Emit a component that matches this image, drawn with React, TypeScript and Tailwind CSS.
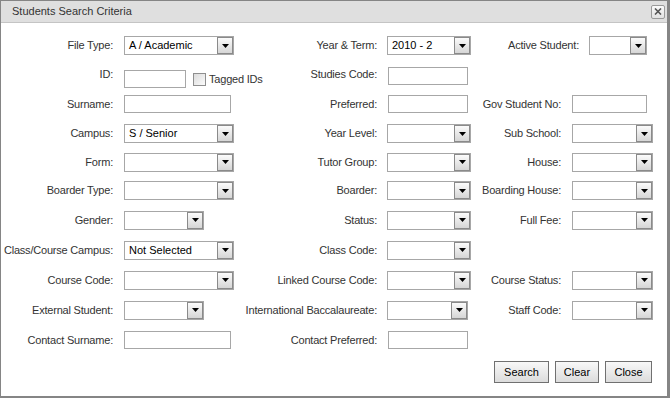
import React from "react";

function Select({ w, value }: { w: string; value?: string }) {
  return (
    <div className={`${w} h-[19px] flex border border-[#a7a7a7] bg-white`}>
      <div className="flex-1 pl-[4px] text-[11px] leading-[17px] text-black whitespace-nowrap overflow-hidden">
        {value}
      </div>
      <div className="w-[16px] h-full border border-[#8a8a8a] bg-gradient-to-b from-[#fbfbfb] to-[#d6d6d6] flex items-center justify-center">
        <svg width="7" height="4" viewBox="0 0 7 4">
          <path d="M0 0h7L3.5 4z" fill="#000" />
        </svg>
      </div>
    </div>
  );
}

function Input({ w }: { w: string }) {
  return <div className={`${w} h-[18px] border border-[#a7a7a7] bg-white`} />;
}

function Label({ w, children }: { w: string; children?: React.ReactNode }) {
  return (
    <div className={`${w} shrink-0 text-right whitespace-nowrap text-[#333] tracking-[-0.2px]`}>{children}</div>
  );
}

function Btn({ w, children }: { w: string; children: React.ReactNode }) {
  return (
    <button
      className={`${w} h-[22px] border border-[#707070] bg-gradient-to-b from-[#f8f8f8] to-[#dcdcdc] text-[11px] text-black`}
    >
      {children}
    </button>
  );
}

type Ctl = React.ReactNode;

function Row({ h, a, b, c, aCtl, bCtl, cCtl }: { h: string; a?: string; b?: string; c?: string; aCtl?: Ctl; bCtl?: Ctl; cCtl?: Ctl }) {
  return (
    <div className={`flex items-center ${h}`}>
      <Label w="w-[112px]">{a}</Label>
      <div className="w-[127px] shrink-0 pl-[11px] flex items-center">{aCtl}</div>
      <Label w="w-[137px]">{b}</Label>
      <div className="w-[98px] shrink-0 pl-[10px] flex items-center">{bCtl}</div>
      <Label w="w-[86px]">{c}</Label>
      <div className="pl-[11px] flex items-center">{cCtl}</div>
    </div>
  );
}

export default function App() {
  return (
    <div className="w-[670px] h-[398px] bg-white border-l border-t border-r-[3px] border-b-[2px] border-[#858585] flex flex-col font-['Liberation_Sans',Arial,sans-serif] text-[11px]">
      <div className="h-[22px] shrink-0 bg-[#dfdfdf] border-b border-[#c4c4c4] flex items-center justify-between pl-[11px] pr-[2px]">
        <span className="text-[#333] text-[11px]">Students Search Criteria</span>
        <div className="w-[14px] h-[14px] rounded-[2px] border border-[#9a9a9a] bg-gradient-to-b from-[#fafafa] to-[#e2e2e2] flex items-center justify-center">
          <svg width="8" height="7" viewBox="0 0 8 7">
            <path d="M1 0.5l6 6M7 0.5l-6 6" stroke="#555" strokeWidth="1.6" />
          </svg>
        </div>
      </div>

      <div className="pt-[8px] flex flex-col">
        {/* row 1 has its own third column */}
        <div className="flex items-center h-[29px]">
          <Label w="w-[112px]">File Type:</Label>
          <div className="w-[127px] shrink-0 pl-[11px] flex items-center">
            <Select w="w-[110px]" value="A / Academic" />
          </div>
          <Label w="w-[137px]">Year &amp; Term:</Label>
          <div className="w-[98px] shrink-0 pl-[10px] flex items-center">
            <Select w="w-[84px]" value="2010 - 2" />
          </div>
          <Label w="w-[104px]">Active Student:</Label>
          <div className="pl-[10px] flex items-center">
            <Select w="w-[58px]" />
          </div>
        </div>

        <Row
          h="h-[29px]"
          a="ID:"
          aCtl={
            <div className="flex items-center mt-[9px]">
              <Input w="w-[62px]" />
              <div className="ml-[7px] w-[13px] h-[13px] border border-[#8f8f8f] bg-gradient-to-br from-[#dcdcdc] to-[#fbfbfb]" />
              <span className="ml-[3px] whitespace-nowrap text-[#333] tracking-[-0.2px]">Tagged IDs</span>
            </div>
          }
          b="Studies Code:"
          bCtl={<div className="ml-[1px] mt-[3px]"><Input w="w-[80px]" /></div>}
        />
        <Row
          h="h-[30px]"
          a="Surname:"
          aCtl={<Input w="w-[107px]" />}
          b="Preferred:"
          bCtl={<div className="ml-[1px]"><Input w="w-[80px]" /></div>}
          c="Gov Student No:"
          cCtl={<Input w="w-[75px]" />}
        />
        <Row
          h="h-[29px]"
          a="Campus:"
          aCtl={<Select w="w-[110px]" value="S / Senior" />}
          b="Year Level:"
          bCtl={<Select w="w-[84px]" />}
          c="Sub School:"
          cCtl={<Select w="w-[81px]" />}
        />
        <Row
          h="h-[28px]"
          a="Form:"
          aCtl={<Select w="w-[110px]" />}
          b="Tutor Group:"
          bCtl={<Select w="w-[84px]" />}
          c="House:"
          cCtl={<Select w="w-[81px]" />}
        />
        <Row
          h="h-[29px]"
          a="Boarder Type:"
          aCtl={<Select w="w-[110px]" />}
          b="Boarder:"
          bCtl={<Select w="w-[84px]" />}
          c="Boarding House:"
          cCtl={<Select w="w-[81px]" />}
        />
        <Row
          h="h-[30px]"
          a="Gender:"
          aCtl={<Select w="w-[80px]" />}
          b="Status:"
          bCtl={<Select w="w-[84px]" />}
          c="Full Fee:"
          cCtl={<Select w="w-[81px]" />}
        />
        <Row
          h="h-[30px]"
          a="Class/Course Campus:"
          aCtl={<Select w="w-[110px]" value="Not Selected" />}
          b="Class Code:"
          bCtl={<Select w="w-[84px]" />}
        />
        <Row
          h="h-[30px]"
          a="Course Code:"
          aCtl={<Select w="w-[110px]" />}
          b="Linked Course Code:"
          bCtl={<Select w="w-[84px]" />}
          c="Course Status:"
          cCtl={<Select w="w-[81px]" />}
        />
        <Row
          h="h-[30px]"
          a="External Student:"
          aCtl={<Select w="w-[80px]" />}
          b="International Baccalaureate:"
          bCtl={<Select w="w-[81px]" />}
          c="Staff Code:"
          cCtl={<Select w="w-[81px]" />}
        />
        <Row
          h="h-[30px]"
          a="Contact Surname:"
          aCtl={<Input w="w-[107px]" />}
          b="Contact Preferred:"
          bCtl={<div className="ml-[1px]"><Input w="w-[80px]" /></div>}
        />

        <div className="mt-[6px] flex justify-end gap-[6px] pr-[15px]">
          <Btn w="w-[55px]">Search</Btn>
          <Btn w="w-[44px]">Clear</Btn>
          <Btn w="w-[47px]">Close</Btn>
        </div>
      </div>
    </div>
  );
}
